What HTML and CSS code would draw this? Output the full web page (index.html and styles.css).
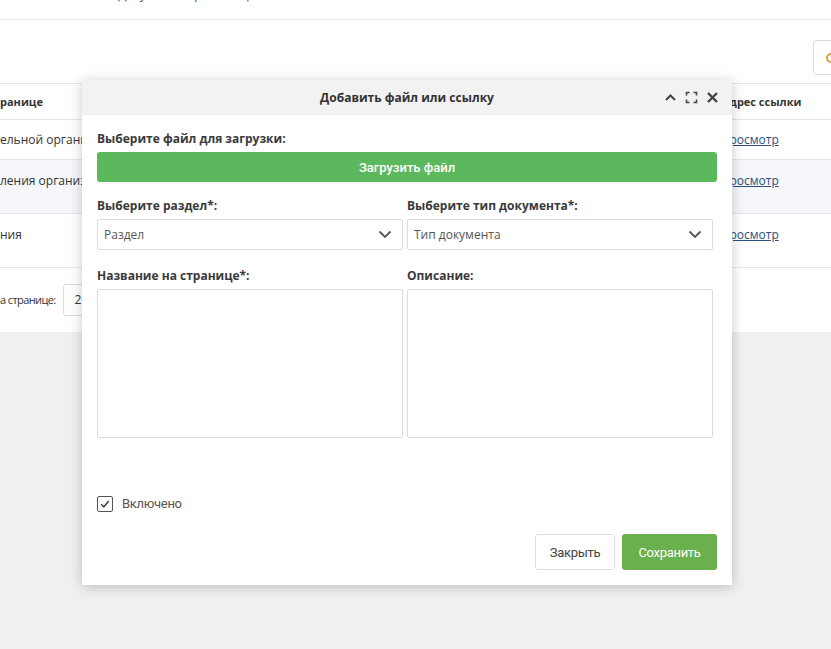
FILE: index.html
```html
<!DOCTYPE html>
<html lang="ru">
<head>
<meta charset="utf-8">
<title>Добавить файл или ссылку</title>
<link rel="stylesheet" href="styles.css">
</head>
<body>
<div class="page">
  <div class="panel">
    <div class="crumbs"><span class="crumbs-text">Главная / Документы организации</span></div>
    <div class="toolbar">
      <button class="tool-btn"><span class="tool-icon"></span></button>
    </div>
    <div class="table">
      <div class="trow thead">
        <div class="c1">ранице</div>
        <div class="c2">Адрес ссылки</div>
      </div>
      <div class="trow r1">
        <div class="c1">ельной организации</div>
        <div class="c2"><a href="#">просмотр</a></div>
      </div>
      <div class="trow r2 alt">
        <div class="c1">ления организации</div>
        <div class="c2"><a href="#">просмотр</a></div>
      </div>
      <div class="trow r3">
        <div class="c1">ния</div>
        <div class="c2"><a href="#">просмотр</a></div>
      </div>
    </div>
    <div class="pager">
      <span class="pager-label">а странице:</span>
      <span class="pager-select">20</span>
    </div>
  </div>
</div>

<div class="modal">
  <div class="modal-head">
    <div class="modal-title">Добавить файл или ссылку</div>
    <div class="modal-tools">
      <svg width="13" height="13" viewBox="0 0 13 13"><path d="M2 9 L6.5 4.5 L11 9" fill="none" stroke="#444" stroke-width="2"/></svg>
      <svg width="13" height="13" viewBox="0 0 13 13"><path d="M1.5 4.5 V1.5 H4.5 M8.5 1.5 H11.5 V4.5 M11.5 8.5 V11.5 H8.5 M4.5 11.5 H1.5 V8.5" fill="none" stroke="#444" stroke-width="1.6"/></svg>
      <svg width="13" height="13" viewBox="0 0 13 13"><path d="M2 2 L11 11 M11 2 L2 11" fill="none" stroke="#444" stroke-width="2.4"/></svg>
    </div>
  </div>
  <div class="modal-body">
    <div class="label">Выберите файл для загрузки:</div>
    <button class="upload">Загрузить файл</button>
    <div class="grid">
      <div class="field">
        <div class="label">Выберите раздел*:</div>
        <div class="select"><span>Раздел</span>
          <svg width="14" height="9" viewBox="0 0 14 9"><path d="M1.5 1.5 L7 7 L12.5 1.5" fill="none" stroke="#555" stroke-width="1.8"/></svg>
        </div>
      </div>
      <div class="field">
        <div class="label">Выберите тип документа*:</div>
        <div class="select"><span>Тип документа</span>
          <svg width="14" height="9" viewBox="0 0 14 9"><path d="M1.5 1.5 L7 7 L12.5 1.5" fill="none" stroke="#555" stroke-width="1.8"/></svg>
        </div>
      </div>
      <div class="field">
        <div class="label">Название на странице*:</div>
        <div class="textarea"></div>
      </div>
      <div class="field">
        <div class="label">Описание:</div>
        <div class="textarea"></div>
      </div>
    </div>
    <label class="check">
      <span class="box"><svg width="12" height="12" viewBox="0 0 12 12"><path d="M2.2 6.2 L4.8 8.8 L9.8 3" fill="none" stroke="#444" stroke-width="1.5"/></svg></span>
      <span class="check-text">Включено</span>
    </label>
    <div class="footer">
      <button class="btn btn-close">Закрыть</button>
      <button class="btn btn-save">Сохранить</button>
    </div>
  </div>
</div>
</body>
</html>
```

FILE: styles.css
```css
* { box-sizing: border-box; }
html, body { margin: 0; padding: 0; }
body {
  width: 831px;
  height: 649px;
  overflow: hidden;
  background: #f0f0f0;
  font-family: "Open Sans", "DejaVu Sans", sans-serif;
  color: #333;
  position: relative;
}
.page { width: 831px; }
.panel { background: #fff; height: 332px; overflow: hidden; }
.crumbs {
  height: 20px;
  border-bottom: 1px solid #e8e8e8;
  overflow: hidden;
  padding-left: 60px;
}
.crumbs-text {
  display: block;
  margin-top: -13px;
  font-size: 12px;
  line-height: 16px;
  color: #444;
}
.toolbar {
  height: 64px;
  display: flex;
  justify-content: flex-end;
  align-items: flex-start;
  padding-top: 20px;
  border-bottom: 1px solid #e6e6e6;
  margin-right: -40px;
}
.tool-btn {
  width: 58px;
  height: 35px;
  border: 1px solid #dcdcdc;
  border-radius: 4px;
  background: #fff;
  padding: 0;
  display: flex;
  align-items: center;
  padding-left: 12px;
}
.tool-icon {
  width: 10px;
  height: 10px;
  border: 2px solid #e29a3b;
  border-radius: 50%;
}
.table { font-size: 12px; }
.trow {
  display: flex;
  justify-content: space-between;
  border-bottom: 1px solid #e6e6e6;
  color: #333;
}
.thead { height: 36px; font-weight: 700; align-items: center; font-size: 11px; }
.r1 { height: 40px; align-items: center; }
.r2 { height: 54px; padding-top: 12px; }
.r3 { height: 54px; padding-top: 12px; }
.alt { background: #f5f7fa; }
.c1 { white-space: nowrap; }
.c2 { width: 109px; white-space: nowrap; }
.c2 a { color: #2b4f7e; text-decoration: underline; }
.pager {
  display: flex;
  align-items: center;
  height: 63px;
  font-size: 11px;
  color: #333;
}
.pager-label { letter-spacing: -0.6px; }
.pager-select {
  margin-left: 7px;
  width: 60px;
  height: 32px;
  border: 1px solid #dcdcdc;
  border-radius: 3px;
  display: flex;
  align-items: center;
  padding-left: 11px;
  font-size: 12px;
}

.modal {
  position: absolute;
  left: 82px;
  top: 80px;
  width: 650px;
  height: 505px;
  background: #fff;
  box-shadow: 0 2px 12px rgba(0,0,0,0.22);
  display: flex;
  flex-direction: column;
}
.modal-head {
  height: 35px;
  background: #f2f2f2;
  display: flex;
  align-items: center;
  justify-content: center;
  position: relative;
}
.modal-title {
  font-size: 12px;
  font-weight: 700;
  color: #333;
}
.modal-tools {
  position: absolute;
  right: 13px;
  top: 11px;
  display: flex;
  gap: 8px;
}
.modal-body {
  padding: 15px;
  flex: 1;
  display: flex;
  flex-direction: column;
}
.label {
  font-size: 12px;
  font-weight: 700;
  color: #3a3a3a;
  line-height: 18px;
  margin-bottom: 4px;
}
.upload {
  width: 620px;
  height: 30px;
  border: 0;
  border-radius: 3px;
  background: #5cb85c;
  color: #fff;
  font-family: Roboto, "Liberation Sans", sans-serif;
  font-weight: 500;
  font-size: 13px;
  padding: 0;
  margin-bottom: 15px;
}
.grid {
  display: grid;
  grid-template-columns: 306px 306px;
  column-gap: 4px;
  row-gap: 17px;
}
.select {
  height: 31px;
  border: 1px solid #dcdcdc;
  border-radius: 2px;
  display: flex;
  align-items: center;
  justify-content: space-between;
  padding: 0 10px 0 6px;
  font-size: 12px;
  color: #555;
}
.textarea {
  height: 149px;
  border: 1px solid #dcdcdc;
  border-radius: 2px;
}
.check {
  margin-top: 57px;
  display: flex;
  align-items: center;
  gap: 9px;
  height: 17px;
}
.box {
  width: 16px;
  height: 16px;
  border: 1.5px solid #555;
  border-radius: 2px;
  display: flex;
  align-items: center;
  justify-content: center;
}
.check-text {
  font-family: Roboto, "Liberation Sans", sans-serif;
  font-size: 13px;
  color: #555;
  letter-spacing: -0.3px;
}
.footer {
  margin-top: auto;
  display: flex;
  justify-content: flex-end;
  gap: 7px;
}
.btn {
  height: 36px;
  border-radius: 3px;
  font-family: Roboto, "Liberation Sans", sans-serif;
  font-size: 13px;
  letter-spacing: -0.3px;
  padding: 0;
}
.btn-close {
  width: 80px;
  background: #fff;
  border: 1px solid #dedede;
  color: #444;
}
.btn-save {
  width: 95px;
  background: #6ab04c;
  border: 0;
  color: #fff;
}
```
